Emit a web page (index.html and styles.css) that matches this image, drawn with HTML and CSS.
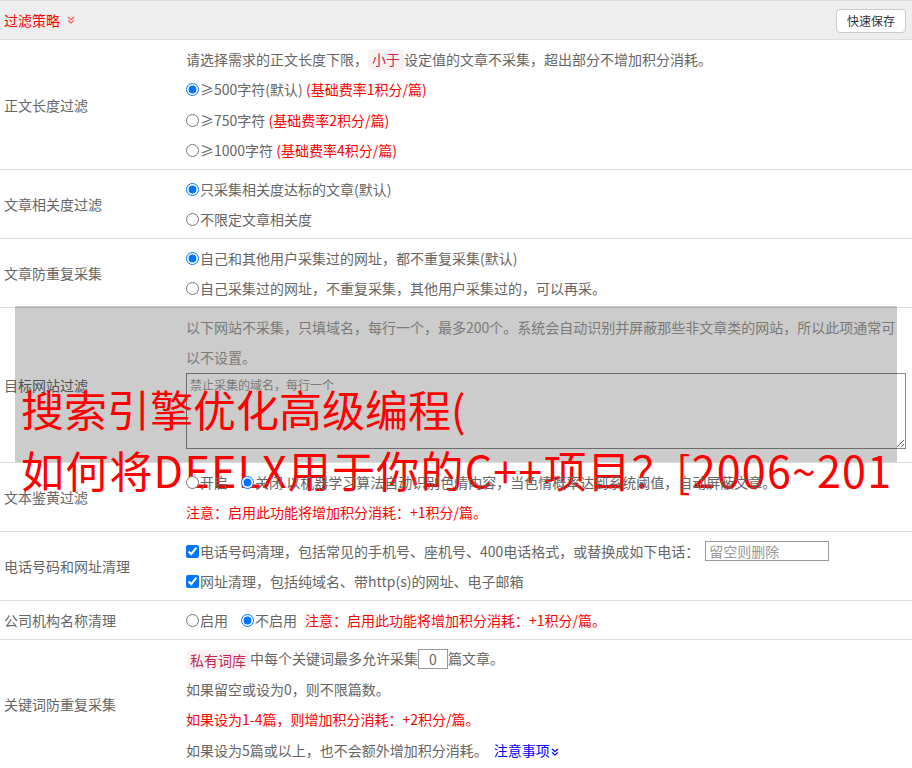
FILE: index.html
```html
<!DOCTYPE html>
<html lang="zh-CN">
<head>
<meta charset="utf-8">
<title>过滤策略</title>
<link rel="stylesheet" href="styles.css">
</head>
<body>
<div class="panel">
  <div class="panel-head">
    <span class="head-title">过滤策略<svg class="chev chev-red" viewBox="0 0 8 8"><path d="M1 1L4 3.6L7 1M1 4.4L4 7L7 4.4"/></svg></span>
    <button class="btn" type="button">快速保存</button>
  </div>

  <div class="row">
    <div class="label">正文长度过滤</div>
    <div class="cell">
      <div class="line">请选择需求的正文长度下限，<span class="tag">小于</span>设定值的文章不采集，超出部分不增加积分消耗。</div>
      <div class="line"><label><input type="radio" name="len" checked>≥500字符(默认)</label> <span class="red">(基础费率1积分/篇)</span></div>
      <div class="line"><label><input type="radio" name="len">≥750字符</label> <span class="red">(基础费率2积分/篇)</span></div>
      <div class="line"><label><input type="radio" name="len">≥1000字符</label> <span class="red">(基础费率4积分/篇)</span></div>
    </div>
  </div>

  <div class="row">
    <div class="label">文章相关度过滤</div>
    <div class="cell">
      <div class="line"><label><input type="radio" name="rel" checked>只采集相关度达标的文章(默认)</label></div>
      <div class="line"><label><input type="radio" name="rel">不限定文章相关度</label></div>
    </div>
  </div>

  <div class="row">
    <div class="label">文章防重复采集</div>
    <div class="cell">
      <div class="line"><label><input type="radio" name="dup" checked>自己和其他用户采集过的网址，都不重复采集(默认)</label></div>
      <div class="line"><label><input type="radio" name="dup">自己采集过的网址，不重复采集，其他用户采集过的，可以再采。</label></div>
    </div>
  </div>

  <div class="row row-blocked">
    <div class="label">目标网站过滤</div>
    <div class="cell">
      <div class="line hint">以下网站不采集，只填域名，每行一个，最多200个。系统会自动识别并屏蔽那些非文章类的网站，所以此项通常可</div>
      <div class="line hint">以不设置。</div>
      <textarea class="domains" placeholder="禁止采集的域名，每行一个"></textarea>
    </div>
    <div class="shade"></div>
    <div class="banner">
      <div>搜索引擎优化高级编程(</div>
      <div class="banner-wide">如何将DEELX用于你的C++项目？[2006~201</div>
    </div>
  </div>

  <div class="row">
    <div class="label">文本鉴黄过滤</div>
    <div class="cell">
      <div class="line"><label class="opt"><input type="radio" name="porn">开启</label><label><input type="radio" name="porn" checked>关闭</label> 以机器学习算法自动识别色情内容，当色情概率达到系统阈值，自动屏蔽文章。</div>
      <div class="line red">注意：启用此功能将增加积分消耗：+1积分/篇。</div>
    </div>
  </div>

  <div class="row">
    <div class="label">电话号码和网址清理</div>
    <div class="cell">
      <div class="line"><label><input type="checkbox" checked>电话号码清理，包括常见的手机号、座机号、400电话格式，或替换成如下电话：</label><input class="phone" type="text" placeholder="留空则删除"></div>
      <div class="line"><label><input type="checkbox" checked>网址清理，包括纯域名、带http(s)的网址、电子邮箱</label></div>
    </div>
  </div>

  <div class="row">
    <div class="label">公司机构名称清理</div>
    <div class="cell">
      <div class="line"><label class="opt"><input type="radio" name="org">启用</label><label><input type="radio" name="org" checked>不启用</label><span class="red note">注意：启用此功能将增加积分消耗：+1积分/篇。</span></div>
    </div>
  </div>

  <div class="row">
    <div class="label">关键词防重复采集</div>
    <div class="cell">
      <div class="line"><span class="tag tag-sm">私有词库</span>中每个关键词最多允许采集<input class="count" type="text" value="0">篇文章。</div>
      <div class="line">如果留空或设为0，则不限篇数。</div>
      <div class="line red">如果设为1-4篇，则增加积分消耗：+2积分/篇。</div>
      <div class="line">如果设为5篇或以上，也不会额外增加积分消耗。<a class="more" href="#">注意事项<svg class="chev chev-blue" viewBox="0 0 8 8"><path d="M1 1L4 3.6L7 1M1 4.4L4 7L7 4.4"/></svg></a></div>
    </div>
  </div>
</div>
</body>
</html>
```

FILE: styles.css
```css
* {
  box-sizing: border-box;
}

body {
  margin: 0;
  font-family: "Noto Sans CJK SC", "Noto Sans", sans-serif;
  font-size: 14px;
  color: #666;
  background: #fff;
}

.panel {
  width: 912px;
}

.panel-head {
  height: 40px;
  border-top: 1px solid #ddd;
  border-bottom: 1px solid #ddd;
  background: #eee;
  display: flex;
  align-items: center;
  justify-content: space-between;
  padding: 0 6px 0 4px;
}

.head-title {
  color: #f00;
  display: flex;
  align-items: center;
}

.chev {
  width: 8px;
  height: 8px;
  fill: none;
  stroke-width: 1.2;
}

.chev-red {
  stroke: #f55;
  margin-left: 7px;
}

.chev-blue {
  stroke: #00f;
  margin-left: 1px;
  vertical-align: 0;
}

.btn {
  height: 24px;
  padding: 0 10px;
  font-family: "Noto Sans CJK SC", sans-serif;
  font-size: 12px;
  color: #333;
  background: #fff;
  border: 1px solid #ccc;
  border-radius: 4px;
  margin-top: 1px;
}

.row {
  display: grid;
  grid-template-columns: 186px 1fr;
  border-bottom: 1px solid #ddd;
  position: relative;
}

.label {
  align-self: center;
  padding-left: 4px;
}

.cell {
  padding: 3.5px 6px 3.5px 0;
}

.line {
  line-height: 30.5px;
  white-space: nowrap;
}

input[type="radio"],
input[type="checkbox"] {
  width: 13px;
  height: 13px;
  margin: 0 1px 0 0;
  vertical-align: -1px;
}

.opt {
  margin-right: 13px;
}

.red {
  color: #f00;
}

.note {
  margin-left: 8px;
}

.tag {
  display: inline-block;
  vertical-align: top;
  margin-top: 5.5px;
  height: 21px;
  line-height: 21px;
  padding: 0 4px;
  background: #f9f2f4;
  color: #c7254e;
  border-radius: 4px;
}

.tag-sm {
  margin-top: 6.5px;
  height: 20px;
  line-height: 20px;
}

.phone,
.count {
  display: inline-block;
  vertical-align: top;
  margin-top: 5.5px;
  height: 20px;
  border: 1px solid #999;
  font-family: "Noto Sans CJK SC", sans-serif;
  font-size: 14px;
  color: #666;
  background: #fff;
  padding: 0 3px;
  outline: none;
}

.phone {
  width: 124px;
  margin-left: 6px;
}

.count {
  width: 30px;
  text-align: center;
}

.phone::placeholder {
  color: #999;
}

.more {
  color: #00f;
  text-decoration: none;
  margin-left: 6px;
}

/* blocked domains row */
.hint {
  color: #999;
}

.domains {
  display: block;
  width: 100%;
  height: 76px;
  margin: 0 0 10px;
  padding: 2px 3px;
  border: 1px solid #888;
  font-family: "Noto Sans CJK SC", sans-serif;
  font-size: 12px;
  color: #666;
  background: #fff;
  resize: both;
}

.domains::placeholder {
  color: #999;
}

.shade {
  position: absolute;
  left: 15px;
  right: 15px;
  top: -2px;
  bottom: 0;
  background: rgba(0, 0, 0, 0.2);
  pointer-events: none;
}

.banner {
  position: absolute;
  left: 15px;
  width: 875px;
  top: 70px;
  padding-left: 6px;
  overflow: hidden;
  color: #f00;
  font-size: 43px;
  line-height: 61px;
  white-space: nowrap;
  pointer-events: none;
}

.banner-wide {
  letter-spacing: 1.2px;
}
```
